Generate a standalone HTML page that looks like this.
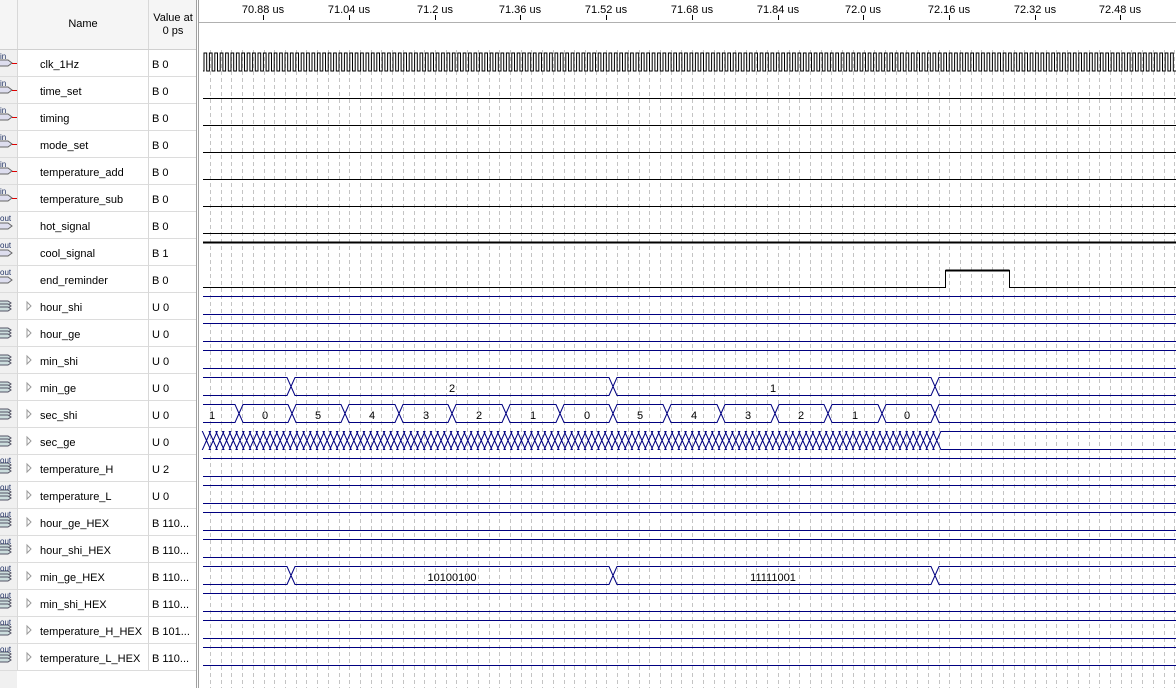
<!DOCTYPE html>
<html><head><meta charset="utf-8"><style>
body{margin:0;width:1176px;height:688px;overflow:hidden;background:#fff;font-family:"Liberation Sans",Tahoma,sans-serif;}
svg{display:block}
text{font-family:"Liberation Sans",Tahoma,sans-serif;font-size:11px;fill:#000}
</style></head><body>
<svg id="s" width="1176" height="688" xmlns="http://www.w3.org/2000/svg">
<rect x="0" y="0" width="197" height="688" fill="#fff"/>
<rect x="0" y="0" width="17" height="688" fill="#f0f0f0"/>
<rect x="0" y="0" width="197" height="49" fill="#f5f5f5"/>
<g id="grid"></g>
<g id="rows"></g>
<line x1="17.5" y1="0" x2="17.5" y2="670" stroke="#d8d8d8"/>
<line x1="148.5" y1="0" x2="148.5" y2="670" stroke="#d8d8d8"/>
<line x1="0" y1="49.5" x2="197" y2="49.5" stroke="#d0d0d0"/>
<line x1="196.5" y1="0" x2="196.5" y2="688" stroke="#a0a0a0"/>
<line x1="198.5" y1="0" x2="198.5" y2="688" stroke="#a0a0a0"/>
<line x1="199" y1="22.5" x2="1176" y2="22.5" stroke="#b0b0b0"/>
<text x="83" y="27" text-anchor="middle">Name</text>
<text x="173" y="21" text-anchor="middle">Value at</text>
<text x="173" y="34" text-anchor="middle">0 ps</text>
<g id="ticks"></g>
<g text-anchor="middle">
<text x="263" y="13">70.88 us</text><text x="349" y="13">71.04 us</text><text x="435" y="13">71.2 us</text><text x="520" y="13">71.36 us</text><text x="606" y="13">71.52 us</text><text x="692" y="13">71.68 us</text><text x="778" y="13">71.84 us</text><text x="863" y="13">72.0 us</text><text x="949" y="13">72.16 us</text><text x="1035" y="13">72.32 us</text><text x="1120" y="13">72.48 us</text>
</g>
<g id="names" transform="translate(0,1)">
<text x="40" y="67">clk_1Hz</text><text x="152" y="67">B 0</text>
<text x="40" y="94">time_set</text><text x="152" y="94">B 0</text>
<text x="40" y="121">timing</text><text x="152" y="121">B 0</text>
<text x="40" y="148">mode_set</text><text x="152" y="148">B 0</text>
<text x="40" y="175">temperature_add</text><text x="152" y="175">B 0</text>
<text x="40" y="202">temperature_sub</text><text x="152" y="202">B 0</text>
<text x="40" y="229">hot_signal</text><text x="152" y="229">B 0</text>
<text x="40" y="256">cool_signal</text><text x="152" y="256">B 1</text>
<text x="40" y="283">end_reminder</text><text x="152" y="283">B 0</text>
<text x="40" y="310">hour_shi</text><text x="152" y="310">U 0</text>
<text x="40" y="337">hour_ge</text><text x="152" y="337">U 0</text>
<text x="40" y="364">min_shi</text><text x="152" y="364">U 0</text>
<text x="40" y="391">min_ge</text><text x="152" y="391">U 0</text>
<text x="40" y="418">sec_shi</text><text x="152" y="418">U 0</text>
<text x="40" y="445">sec_ge</text><text x="152" y="445">U 0</text>
<text x="40" y="472">temperature_H</text><text x="152" y="472">U 2</text>
<text x="40" y="499">temperature_L</text><text x="152" y="499">U 0</text>
<text x="40" y="526">hour_ge_HEX</text><text x="152" y="526">B 110...</text>
<text x="40" y="553">hour_shi_HEX</text><text x="152" y="553">B 110...</text>
<text x="40" y="580">min_ge_HEX</text><text x="152" y="580">B 110...</text>
<text x="40" y="607">min_shi_HEX</text><text x="152" y="607">B 110...</text>
<text x="40" y="634">temperature_H_HEX</text><text x="152" y="634">B 101...</text>
<text x="40" y="661">temperature_L_HEX</text><text x="152" y="661">B 110...</text>
</g>
<g id="icons"></g>
<g id="waves"></g>
<g text-anchor="middle" style="font-size:11px" transform="translate(0,1)">
<text x="452" y="391">2</text><text x="773" y="391">1</text>
<text x="212" y="418">1</text><text x="265" y="418">0</text><text x="318" y="418">5</text><text x="372" y="418">4</text><text x="426" y="418">3</text><text x="479" y="418">2</text><text x="533" y="418">1</text><text x="587" y="418">0</text><text x="640" y="418">5</text><text x="694" y="418">4</text><text x="748" y="418">3</text><text x="801" y="418">2</text><text x="855" y="418">1</text><text x="907" y="418">0</text>
<text x="452" y="580">10100100</text><text x="773" y="580">11111001</text>
</g>
</svg>
<script>
var NS="http://www.w3.org/2000/svg";
function el(p,t,a){var e=document.createElementNS(NS,t);for(var k in a)e.setAttribute(k,a[k]);document.getElementById(p).appendChild(e);return e;}
for(var x=210;x<1176;x+=10.715){el("grid","line",{x1:Math.round(x)+.5,y1:50,x2:Math.round(x)+.5,y2:688,stroke:"#c4c4c4","stroke-dasharray":"4,3"});}
[263,349,435,520,606,692,778,863,949,1035,1120].forEach(function(x){el("ticks","line",{x1:x+.5,y1:15,x2:x+.5,y2:20,stroke:"#000"});});
for(var i=0;i<24;i++){var y=50+27*(i+1)-0.5;el("rows","line",{x1:0,y1:y,x2:197,y2:y,stroke:"#dcdcdc"});}
for(var i=0;i<23;i++){var t=50+27*i;
 if(i<6){el("icons","path",{d:"M0 "+(t+10)+"h8l4 3l-4 3h-8",fill:"#dde",stroke:"#666"});el("icons","line",{x1:12,y1:t+13.5,x2:17,y2:t+13.5,stroke:"#d00"});el("icons","text",{x:0,y:t+9,style:"font-size:8px;fill:#236"}).textContent="in";}
 else if(i<9){el("icons","path",{d:"M0 "+(t+11)+"h8l4 3l-4 3h-8",fill:"#dde",stroke:"#666"});el("icons","text",{x:0,y:t+9,style:"font-size:8px;fill:#236"}).textContent="out";}
 else{for(var k=0;k<3;k++)el("icons","path",{d:"M0 "+(t+8+k*3)+"h8l3 2l-3 2h-8",fill:"#cdd",stroke:"#556"});if(i>=15){el("icons","text",{x:0,y:t+8,style:"font-size:8px;fill:#236"}).textContent="out";}
 el("icons","path",{d:"M27 "+(t+9)+"l4 4l-4 4z",fill:"none",stroke:"#999"});}
}
var X0=203,X1=1176;
var d="M"+X0+" 71",p=2.7,x=X0+1,h=false;
while(x<X1){d+="H"+x.toFixed(1)+"V"+(h?71:53);h=!h;x+=p;}
d+="H"+X1;el("waves","path",{d:d,fill:"none",stroke:"#000"});
function hl(y,c,w){el("waves","line",{x1:X0,y1:y,x2:X1,y2:y,stroke:c,"stroke-width":w||1});}
hl(98.5,"#000");hl(125.5,"#000");hl(152.5,"#000");hl(179.5,"#000");hl(206.5,"#000");hl(233.5,"#000");hl(242.5,"#000",2);
el("waves","path",{d:"M"+X0+" 287.5H945.5V270.5H1009.5V287.5H"+X1,fill:"none",stroke:"#000","stroke-width":1});
el("waves","path",{d:"M945.5 270.5H1009.5",stroke:"#000","stroke-width":2});
var B="#000080";
function bus(top,tr){var a=top+3.5,b=top+21.5,m=(a+b)/2,pts=[X0].concat(tr).concat([X1]);
 var dd="";for(var i=0;i<pts.length-1;i++){var s=pts[i]+(i?4:0),e=pts[i+1]-(i<pts.length-2?4:0);
  var sx=i?pts[i]:X0,ex=i<pts.length-2?pts[i+1]:X1;
  dd+="M"+sx+" "+m+(i?"L"+s+" "+a:"M"+X0+" "+a)+"H"+e+(i<pts.length-2?"L"+ex+" "+m:"");
  dd+="M"+(i?sx:X0)+" "+m+(i?"L"+s+" "+b:"M"+X0+" "+b)+"H"+e+(i<pts.length-2?"L"+ex+" "+m:"");}
 el("waves","path",{d:dd,fill:"none",stroke:B});}
[293,320,347,455,482,509,536,590,617,644].forEach(function(t){bus(t,[]);});
bus(374,[291,613,935]);bus(563,[291,613,935]);
bus(401,[239,292,345,399,452,506,560,613,667,721,775,828,882,935]);
var sg=[];for(var x=206.5;x<940;x+=6.7)sg.push(+x.toFixed(1));bus(428,sg);
</script>
</body></html>
